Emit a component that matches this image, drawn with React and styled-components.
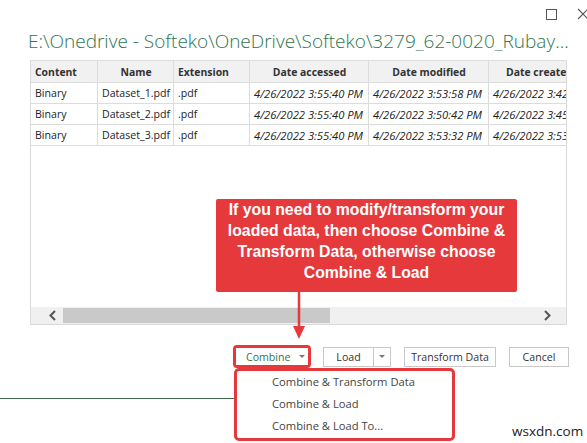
import React from 'react'
import styled, { createGlobalStyle } from 'styled-components'

//STYLE
const green = '#2f7550'
const red = '#e5393b'

const GlobalStyle = createGlobalStyle`
  html, body {
    margin: 0;
    padding: 0;
    background: #ffffff;
  }
  body {
    font-family: "Open Sans", "Noto Sans", sans-serif;
  }
`

const Dialog = styled.div`
  position: relative;
  width: 587px;
  height: 443px;
  overflow: hidden;
  background: #ffffff;
  display: flex;
  flex-direction: column;
`

const WindowBar = styled.div`
  height: 28px;
  display: flex;
  justify-content: flex-end;
  align-items: center;
  gap: 20px;
  margin-right: -2px;
  svg {
    display: block;
  }
`

const Title = styled.h1`
  margin: 0;
  padding-left: 28px;
  height: 32px;
  font-family: "Open Sans", "Noto Sans", sans-serif;
  font-weight: 300;
  font-size: 19px;
  line-height: 26px;
  color: ${green};
  white-space: nowrap;
`

const TableFrame = styled.div`
  margin-left: 30px;
  width: 537px;
  height: 265px;
  box-sizing: border-box;
  border: 1px solid #dadada;
  border-top: none;
  display: flex;
  flex-direction: column;
  overflow: hidden;
`

const TableArea = styled.div`
  flex: 1;
  overflow: hidden;
`

const Grid = styled.table`
  border-collapse: collapse;
  table-layout: fixed;
  width: 647px;
  margin-left: -1px;
  font-size: 10.6px;
  color: #222;
  th, td {
    height: 21px;
    padding: 0 3px 0 4px;
    white-space: nowrap;
    overflow: hidden;
    border: 1px solid #dcdcdc;
    box-sizing: border-box;
  }
  th {
    height: 22px;
    background: #f1f1f1;
    font-weight: 700;
    font-size: 10.4px;
    text-align: center;
    color: #333;
  }
  th.left {
    text-align: left;
  }
  td.date {
    font-style: italic;
    font-size: 11.2px;
  }
`

const ScrollBar = styled.div`
  height: 17px;
  background: #f0f0f0;
  display: flex;
  align-items: center;
  padding: 0 14px 0 17px;
  .thumb {
    margin-left: 6px;
    width: 267px;
    height: 15px;
    background: #c9c9c9;
  }
  .spacer {
    flex: 1;
  }
  svg {
    display: block;
  }
`

const ButtonRow = styled.div`
  margin-top: 20px;
  height: 23px;
  display: flex;
  align-items: center;
  padding-left: 233px;
`

const Highlight = styled.div`
  border: 3px solid ${red};
  border-radius: 4px;
  margin-right: 12px;
`

const Button = styled.div`
  height: ${p => (p.$plain ? 17 : 20)}px;
  box-sizing: border-box;
  border: ${p => (p.$plain ? 'none' : '1px solid #c8c8c8')};
  background: #fff;
  display: flex;
  align-items: center;
  justify-content: ${p => (p.$plain ? 'flex-start' : 'center')};
  gap: 9px;
  padding: 0 ${p => (p.$plain ? '0 0 10px' : '0')};
  font-size: 10.6px;
  white-space: nowrap;
  color: ${p => (p.$primary ? green : '#333')};
  margin-left: ${p => p.$gap || 0}px;
  width: ${p => p.$w}px;
`

const SplitButton = styled.div`
  display: flex;
  height: 20px;
  box-sizing: border-box;
  border: 1px solid #c8c8c8;
  font-size: 10.6px;
  color: #333;
  .main {
    width: 49px;
    display: flex;
    align-items: center;
    justify-content: center;
    border-right: 1px solid #c8c8c8;
  }
  .drop {
    width: 16px;
    display: flex;
    align-items: center;
    justify-content: center;
  }
`

const Caret = styled.span`
  width: 0;
  height: 0;
  border-left: 3px solid transparent;
  border-right: 3px solid transparent;
  border-top: 3px solid #777;
`

const Footer = styled.div`
  margin-top: 30px;
  width: 236px;
  border-top: 1.5px solid #3a6b4c;
`

const Menu = styled.div`
  position: absolute;
  left: 234px;
  top: 368px;
  width: 221px;
  height: 73px;
  box-sizing: border-box;
  border: 3px solid ${red};
  border-radius: 5px;
  background: #fff;
  .item {
    height: 22px;
    line-height: 22px;
    padding-left: 35px;
    font-size: 11.2px;
    color: #444;
  }
`

const Callout = styled.div`
  position: absolute;
  left: 216px;
  top: 199px;
  width: 301px;
  height: 93px;
  box-sizing: border-box;
  padding-top: 0;
  background: ${red};
  border-radius: 2px;
  color: #fff;
  font-family: "Liberation Sans", Arial, sans-serif;
  font-weight: 700;
  font-size: 15.8px;
  line-height: 21px;
  text-align: center;
  white-space: nowrap;
`

const Arrow = styled.svg`
  position: absolute;
  left: 292px;
  top: 292px;
`

const Watermark = styled.div`
  position: absolute;
  left: 512px;
  top: 422px;
  font-family: "Open Sans", sans-serif;
  font-size: 13.5px;
  color: #222;
`

//DATA
const rows = [
  ['Binary', 'Dataset_1.pdf', '.pdf', '4/26/2022 3:55:40 PM', '4/26/2022 3:53:58 PM', '4/26/2022 3:42:10 PM'],
  ['Binary', 'Dataset_2.pdf', '.pdf', '4/26/2022 3:55:40 PM', '4/26/2022 3:50:42 PM', '4/26/2022 3:45:12 PM'],
  ['Binary', 'Dataset_3.pdf', '.pdf', '4/26/2022 3:55:40 PM', '4/26/2022 3:53:32 PM', '4/26/2022 3:53:02 PM'],
]

//MAIN COMPONENT
function App() {
  return (
    <Dialog>
      <GlobalStyle />
      <WindowBar>
        <svg width="11" height="11" viewBox="0 0 11 11">
          <rect x="0.5" y="0.5" width="10" height="10" fill="none" stroke="#555" strokeWidth="1" />
        </svg>
        <svg width="12" height="12" viewBox="0 0 12 12">
          <path d="M1 1 L11 11 M11 1 L1 11" stroke="#555" strokeWidth="1.1" />
        </svg>
      </WindowBar>
      <Title>E:\Onedrive - Softeko\OneDrive\Softeko\3279_62-0020_Rubay...</Title>

      <TableFrame>
        <TableArea>
          <Grid>
            <colgroup>
              <col style={{ width: 67 }} />
              <col style={{ width: 76 }} />
              <col style={{ width: 76 }} />
              <col style={{ width: 119 }} />
              <col style={{ width: 120 }} />
              <col style={{ width: 189 }} />
            </colgroup>
            <thead>
              <tr>
                <th className="left">Content</th>
                <th>Name</th>
                <th className="left">Extension</th>
                <th>Date accessed</th>
                <th>Date modified</th>
                <th style={{ textAlign: 'left', paddingLeft: 17 }}>Date created</th>
              </tr>
            </thead>
            <tbody>
              {rows.map((r, i) => (
                <tr key={i}>
                  <td>{r[0]}</td>
                  <td>{r[1]}</td>
                  <td>{r[2]}</td>
                  <td className="date">{r[3]}</td>
                  <td className="date">{r[4]}</td>
                  <td className="date">{r[5]}</td>
                </tr>
              ))}
            </tbody>
          </Grid>
        </TableArea>
        <ScrollBar>
          <svg width="9" height="11" viewBox="0 0 9 11">
            <path d="M7 1 L2.5 5.5 L7 10" fill="none" stroke="#555" strokeWidth="2" />
          </svg>
          <div className="thumb" />
          <div className="spacer" />
          <svg width="9" height="11" viewBox="0 0 9 11">
            <path d="M2 1 L6.5 5.5 L2 10" fill="none" stroke="#555" strokeWidth="2" />
          </svg>
        </ScrollBar>
      </TableFrame>

      <ButtonRow>
        <Highlight>
          <Button $primary $plain $w={72}>
            Combine <Caret />
          </Button>
        </Highlight>
        <SplitButton>
          <div className="main">Load</div>
          <div className="drop"><Caret /></div>
        </SplitButton>
        <Button $gap={13} $w={92}>Transform Data</Button>
        <Button $gap={13} $w={60}>Cancel</Button>
      </ButtonRow>
      <Footer />

      <Callout>
        If you need to modify/transform your<br />
        loaded data, then choose Combine &amp;<br />
        Transform Data, otherwise choose<br />
        Combine &amp; Load
      </Callout>
      <Arrow width="14" height="50" viewBox="0 0 14 50">
        <line x1="7" y1="0" x2="7" y2="38" stroke={red} strokeWidth="2.5" />
        <polygon points="1,34 13,34 7,47" fill={red} />
      </Arrow>

      <Menu>
        <div className="item">Combine &amp; Transform Data</div>
        <div className="item">Combine &amp; Load</div>
        <div className="item">Combine &amp; Load To...</div>
      </Menu>

      <Watermark>wsxdn.com</Watermark>
    </Dialog>
  )
}
export default App
